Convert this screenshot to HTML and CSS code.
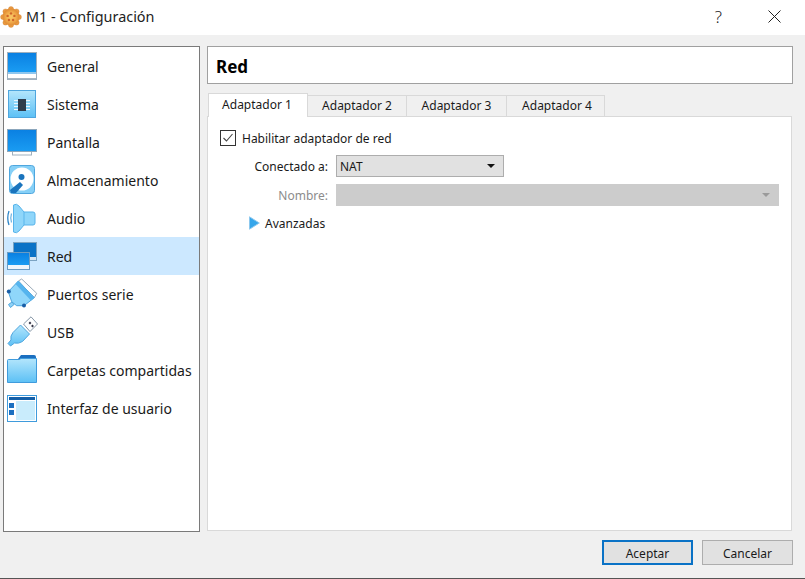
FILE: index.html
```html
<!DOCTYPE html>
<html lang="es">
<head>
<meta charset="utf-8">
<title>M1 - Configuración</title>
<link rel="stylesheet" href="styles.css">
</head>
<body>
<svg class="defs" width="0" height="0">
  <defs>
    <linearGradient id="sky" x1="0" y1="0" x2="0" y2="1"><stop offset="0" stop-color="#b4e6fc"/><stop offset="1" stop-color="#5cc0f5"/></linearGradient>
    <linearGradient id="screen" x1="0" y1="0" x2="0" y2="1"><stop offset="0" stop-color="#0a80e2"/><stop offset="1" stop-color="#1a9cf2"/></linearGradient>
    <radialGradient id="cog"><stop offset="0" stop-color="#f8c868"/><stop offset=".55" stop-color="#f3b04e"/><stop offset="1" stop-color="#e08a34"/></radialGradient>
  </defs>
</svg>
<div class="window">
  <header class="titlebar">
    <svg class="app-icon" width="22" height="22" viewBox="0 0 22 22">
      <g fill="#ea9a42" stroke="#cf8436" stroke-width=".4">
        <circle cx="11" cy="3.200" r="2.600"/><circle cx="16.500" cy="5.500" r="2.600"/><circle cx="18.800" cy="11" r="2.600"/><circle cx="16.500" cy="16.500" r="2.600"/><circle cx="11" cy="18.800" r="2.600"/><circle cx="5.500" cy="16.500" r="2.600"/><circle cx="3.200" cy="11" r="2.600"/><circle cx="5.500" cy="5.500" r="2.600"/>
      </g>
      <circle cx="11" cy="11" r="8.400" fill="url(#cog)"/>
      <g fill="#d0652a"><circle cx="11" cy="7.400" r="1.200"/><circle cx="14.400" cy="9.900" r="1.200"/><circle cx="13.100" cy="14" r="1.200"/><circle cx="8.900" cy="14" r="1.200"/><circle cx="7.600" cy="9.900" r="1.200"/></g>
    </svg>
    <span class="title">M1 - Configuración</span>
    <span class="help">?</span>
    <svg class="close" width="13" height="13" viewBox="0 0 13 13"><path d="M.5.5l12 12M12.500.5l-12 12" stroke="#222" fill="none"/></svg>
  </header>

  <main class="content">
    <nav class="sidebar">
      <div class="nav-item">
        <svg class="nav-icon" viewBox="0 0 32 32"><rect x="1.500" y="2.500" width="29" height="27" fill="#fff" stroke="#9fb0be"/><rect x="2" y="3" width="28" height="19" fill="url(#screen)"/><rect x="2" y="22" width="28" height="2" fill="#8ec7ef"/><rect x="2" y="28" width="28" height="1" fill="#aab8c4"/></svg>
        <span>General</span>
      </div>
      <div class="nav-item">
        <svg class="nav-icon" viewBox="0 0 32 32"><rect x="2.500" y="2.500" width="27" height="27" fill="url(#sky)" stroke="#4fa6de"/><path d="M8 12.500h16M8 15.500h16M8 18.500h16M8 21.500h16" stroke="#eaf7ff"/><rect x="12" y="11" width="8" height="12" fill="#2f3c4c"/></svg>
        <span>Sistema</span>
      </div>
      <div class="nav-item">
        <svg class="nav-icon" viewBox="0 0 32 32"><rect x="6.500" y="24" width="19" height="5" fill="#fff" stroke="#9fb0be"/><rect x="1.500" y="3.500" width="29" height="22" fill="url(#screen)" stroke="#8ba6bc"/></svg>
        <span>Pantalla</span>
      </div>
      <div class="nav-item">
        <svg class="nav-icon" viewBox="0 0 32 32"><rect x="3.500" y="1.500" width="25" height="28" rx="3" fill="#86d0f7" stroke="#4fa6de"/><circle cx="16" cy="15" r="11.500" fill="#fff"/><circle cx="15.500" cy="13" r="3" fill="#1a74bd"/><path d="M4 26l10-8 3 3-7 8H5z" fill="#1a74bd"/></svg>
        <span>Almacenamiento</span>
      </div>
      <div class="nav-item">
        <svg class="nav-icon" viewBox="0 0 32 32"><path d="M3 9q-2.500 7 0 14" stroke="#2f86c8" fill="none" stroke-width="1.300"/><path d="M5.500 11.500q-1.500 4.500 0 9" stroke="#6fb4e2" fill="none" stroke-width="1.200"/><path d="M7.500 3q3-2 5.500 1l5 6h9q2 0 2 2v9q0 2-2 2h-9l-5 6q-2.500 3-5.500 1z" fill="#8fd6fa" stroke="#58b4ea"/><path d="M18 10v13" stroke="#5ab6ec"/></svg>
        <span>Audio</span>
      </div>
      <div class="nav-item active">
        <svg class="nav-icon" viewBox="0 0 32 32"><rect x="7.500" y="2.500" width="23" height="18" fill="#d7e6f2" stroke="#7ba3c2"/><rect x="8" y="3" width="22" height="14" fill="#0a72c6"/><rect x="1.500" y="12.500" width="22" height="17" fill="#eef6fc" stroke="#6c9cc2"/><rect x="2" y="13" width="21" height="12" fill="url(#screen)"/></svg>
        <span>Red</span>
      </div>
      <div class="nav-item">
        <svg class="nav-icon" viewBox="0 0 32 32"><path d="M15.700 1l15 14.300-2.400 4.400L12.300 3z" fill="#fff" stroke="#9aaab8"/><path d="M12.300 3l16 16.700L18 27.700h-7.300l-5-4L2.300 13.700z" fill="#8fd6fa" stroke="#4fa6de"/><path d="M12.300 3l16 16.700-3.300 2.800L9.500 6z" fill="#55b4ee"/><path d="M6 24l-3.500 2.500 2 3L8 26.500z" fill="#8ed2f6" stroke="#4fa6de"/><circle cx="2.800" cy="13.500" r="2" fill="#1a5ea6"/><circle cx="18" cy="27.500" r="2" fill="#1a5ea6"/></svg>
        <span>Puertos serie</span>
      </div>
      <div class="nav-item">
        <svg class="nav-icon" viewBox="0 0 32 32"><path d="M25 .8L31.500 8 24 15.500 17.500 8z" fill="#fff" stroke="#8596a6"/><rect x="23" y="6" width="2" height="2" fill="#334" transform="rotate(45 24 7)"/><rect x="25.500" y="9" width="2" height="2" fill="#334" transform="rotate(45 26.500 10)"/><path d="M14.500 9l9 9-7 7.500q-4 2.500-8 1.500L4.500 30 2 27.500l3-3.500q-1-4 2-7.500z" fill="url(#sky)" stroke="#4fa6de"/></svg>
        <span>USB</span>
      </div>
      <div class="nav-item">
        <svg class="nav-icon" viewBox="0 0 32 32"><path d="M12 5l3-4h13q2 0 2 2v5H12z" fill="#1b6fc0"/><path d="M1.500 6.500q0-1 1-1H13l2-1h15.500v24h-29z" fill="url(#sky)" stroke="#3f9bdc"/></svg>
        <span>Carpetas compartidas</span>
      </div>
      <div class="nav-item">
        <svg class="nav-icon" viewBox="0 0 32 32"><rect x="1.500" y="3.500" width="29" height="26" fill="#fff" stroke="#3f9bdc"/><rect x="3" y="5" width="26" height="3" fill="#145fa8"/><rect x="3" y="11" width="5" height="5" fill="#1b6fc0"/><rect x="3" y="18" width="5" height="5" fill="#1b6fc0"/><rect x="10" y="9" width="19" height="19" fill="#c9ecfc"/></svg>
        <span>Interfaz de usuario</span>
      </div>
    </nav>

    <section class="panel">
      <h1 class="panel-title">Red</h1>
      <div class="tabs">
        <div class="tab active">Adaptador 1</div>
        <div class="tab tab-second">Adaptador 2</div>
        <div class="tab tab-third">Adaptador 3</div>
        <div class="tab tab-fourth">Adaptador 4</div>
      </div>
      <div class="tab-pane">
        <label class="check-row">
          <svg class="checkbox" width="16" height="16" viewBox="0 0 16 16"><rect x=".5" y=".5" width="15" height="15" fill="#fff" stroke="#333"/><path d="M3.500 8l3 3 6-7" stroke="#444" fill="none" stroke-width="1.100"/></svg>
          <span>Habilitar adaptador de red</span>
        </label>
        <div class="form">
          <span class="form-label">Conectado a:</span>
          <div class="combo combo-short"><span>NAT</span><i class="arrow"></i></div>
          <span class="form-label disabled">Nombre:</span>
          <div class="combo combo-disabled"><i class="arrow arrow-disabled"></i></div>
        </div>
        <div class="advanced">
          <svg class="triangle" width="11" height="14" viewBox="0 0 11 14"><path d="M.5.800L10.300 7 .5 13.200z" fill="#36a6ea" stroke="#8cc8ee"/></svg>
          <span>Avanzadas</span>
        </div>
      </div>
    </section>
  </main>

  <footer class="actions">
    <button class="btn btn-default" type="button">Aceptar</button>
    <button class="btn" type="button">Cancelar</button>
  </footer>
</div>
</body>
</html>
```

FILE: styles.css
```css
* { box-sizing: border-box; }
html, body { margin: 0; padding: 0; }
body {
  width: 805px;
  height: 579px;
  overflow: hidden;
  font-family: "Noto Sans", "Open Sans", sans-serif;
  font-size: 12px;
  color: #1a1a1a;
  background: #f0f0f0;
}
.defs { position: absolute; }
.window {
  height: 579px;
  display: flex;
  flex-direction: column;
  border-bottom: 1px solid #555;
}
.titlebar {
  height: 35px;
  flex: none;
  display: flex;
  align-items: center;
  background: #fff;
  padding: 0 24px 2px 0;
}
.app-icon { margin-right: 4px; }
.title { font-size: 14.4px; color: #222; flex: 1; }
.help { font-size: 17px; font-weight: 300; color: #222; margin-right: 46px; }
.content {
  flex: 1;
  display: flex;
  gap: 7px;
  padding: 11px 12px 0 3px;
}
.sidebar {
  width: 197px;
  height: 486px;
  background: #fff;
  border: 1px solid #7a7a7a;
  display: flex;
  flex-direction: column;
}
.nav-item {
  height: 38px;
  flex: none;
  display: flex;
  align-items: center;
  gap: 9px;
  padding-left: 2px;
  font-size: 14px;
}
.nav-item.active { background: #cce8ff; }
.nav-icon { width: 32px; height: 32px; flex: none; }
.panel { flex: 1; display: flex; flex-direction: column; }
.panel-title {
  height: 38px;
  margin: 0;
  background: #fff;
  border: 1px solid #a0a0a0;
  font-size: 17px;
  font-weight: 700;
  line-height: 39px;
  padding-left: 8px;
  color: #000;
}
.tabs {
  display: flex;
  align-items: flex-end;
  height: 24px;
  margin-top: 8px;
  padding-left: 1px;
}
.tab {
  height: 21px;
  background: #f0f0f0;
  border: 1px solid #d9d9d9;
  border-left: 0;
  border-bottom: 0;
  text-align: center;
  line-height: 19px;
}
.tab-second { width: 99px; }
.tab-third { width: 100px; }
.tab-fourth { width: 98px; padding-left: 3px; }
.tab.active {
  width: 100px;
  height: 24px;
  background: #fff;
  border-left: 1px solid #d9d9d9;
  position: relative;
  z-index: 1;
  margin-bottom: -1px;
  padding-right: 2px;
  line-height: 21px;
}
.tab-pane {
  height: 415px;
  width: 585px;
  background: #fff;
  border: 1px solid #d9d9d9;
  padding: 12px 12px 0 12px;
}
.check-row { display: flex; align-items: center; gap: 6px; height: 18px; }
.checkbox { flex: none; }
.form {
  display: grid;
  grid-template-columns: 108px 443px;
  column-gap: 8px;
  row-gap: 7px;
  align-items: center;
  margin-top: 8px;
}
.form-label { text-align: right; }
.form-label.disabled { color: #8c8c8c; }
.combo {
  height: 22px;
  display: flex;
  align-items: center;
  justify-content: space-between;
  padding: 0 8px 0 3px;
  background: #e1e1e1;
  border: 1px solid #adadad;
}
.combo-short { width: 168px; }
.combo-disabled { background: #cccccc; border-color: #cccccc; justify-content: flex-end; }
.arrow {
  width: 0;
  height: 0;
  border-left: 4px solid transparent;
  border-right: 4px solid transparent;
  border-top: 4px solid #111;
}
.arrow-disabled { border-top-color: #9a9a9a; }
.advanced {
  display: flex;
  align-items: center;
  gap: 5px;
  margin: 9px 0 0 29px;
  height: 16px;
}
.triangle { flex: none; }
.actions {
  height: 46px;
  flex: none;
  display: flex;
  justify-content: flex-end;
  gap: 9px;
  padding: 8px 12px 0 0;
}
.btn {
  width: 91px;
  height: 25px;
  background: #e1e1e1;
  border: 1px solid #adadad;
  font: inherit;
  color: #1a1a1a;
  padding: 1px 0 0;
}
.btn-default { border: 2px solid #0a72c6; }
```
